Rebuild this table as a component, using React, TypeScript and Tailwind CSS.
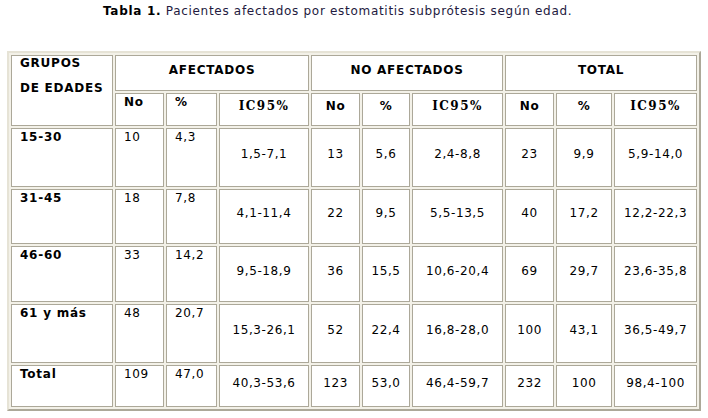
const groups = [
  {
    edad: '15-30',
    rows: ['10', '4,3', '1,5-7,1', '13', '5,6', '2,4-8,8', '23', '9,9', '5,9-14,0'],
    h: 'h-[59px]',
  },
  {
    edad: '31-45',
    rows: ['18', '7,8', '4,1-11,4', '22', '9,5', '5,5-13,5', '40', '17,2', '12,2-22,3'],
    h: 'h-[55px]',
  },
  {
    edad: '46-60',
    rows: ['33', '14,2', '9,5-18,9', '36', '15,5', '10,6-20,4', '69', '29,7', '23,6-35,8'],
    h: 'h-[56px]',
  },
  {
    edad: '61 y más',
    rows: ['48', '20,7', '15,3-26,1', '52', '22,4', '16,8-28,0', '100', '43,1', '36,5-49,7'],
    h: 'h-[59px]',
  },
  {
    edad: 'Total',
    rows: ['109', '47,0', '40,3-53,6', '123', '53,0', '46,4-59,7', '232', '100', '98,4-100'],
    h: 'h-[42px]',
  },
];

const cell = 'border border-[#aca899] bg-white p-0';
const topLeft = `${cell} align-top text-left pl-[8px] pt-[1px]`;
const middle = `${cell} align-middle text-center pb-[6px]`;

const Ic = () => (
  <span className="font-['DejaVu_Serif',serif] font-bold tracking-[1.5px]">IC95%</span>
);

export default function App() {
  return (
    <div className="min-h-[418px] w-[708px] bg-white pt-[4px] font-['DejaVu_Sans',sans-serif] text-[12px] leading-[15px] text-black">
      <p className="pl-[103px] tracking-[0.7px] text-[#231a40]">
        <b className="text-black">Tabla 1.</b> Pacientes afectados por estomatitis subprótesis según edad.
      </p>

      <table className="ml-[7px] mt-[32px] w-[694px] table-fixed border-separate border-spacing-[2px] border-2 border-t-[#e6e3d6] border-l-[#e6e3d6] border-r-[#aca899] border-b-[#aca899] bg-[#f3f1e8]">
        <colgroup>
          <col className="w-[102px]" />
          <col className="w-[49px]" />
          <col className="w-[51px]" />
          <col className="w-[90px]" />
          <col className="w-[49px]" />
          <col className="w-[48px]" />
          <col className="w-[91px]" />
          <col className="w-[49px]" />
          <col className="w-[56px]" />
          <col className="w-[83px]" />
        </colgroup>
        <thead className="font-bold tracking-[0.75px]">
          <tr className="h-[36px]">
            <td rowSpan={2} className={`${cell} align-top text-left pl-[8px]`}>
              <div>GRUPOS</div>
              <div className="mt-[10px]">DE EDADES</div>
            </td>
            <td colSpan={3} className={middle}>AFECTADOS</td>
            <td colSpan={3} className={middle}>NO AFECTADOS</td>
            <td colSpan={3} className={middle}>TOTAL</td>
          </tr>
          <tr className="h-[33px]">
            <td className={topLeft}>No</td>
            <td className={topLeft}>%</td>
            <td className={middle}><Ic /></td>
            <td className={middle}>No</td>
            <td className={middle}>%</td>
            <td className={middle}><Ic /></td>
            <td className={middle}>No</td>
            <td className={middle}>%</td>
            <td className={middle}><Ic /></td>
          </tr>
        </thead>
        <tbody className="tracking-[0.6px]">
          {groups.map((g) => (
            <tr key={g.edad} className={g.h}>
              <td className={`${topLeft} font-bold tracking-[0.75px]`}>{g.edad}</td>
              {g.rows.map((v, i) => (
                <td key={i} className={i < 2 ? topLeft : middle}>
                  {v}
                </td>
              ))}
            </tr>
          ))}
        </tbody>
      </table>
    </div>
  );
}
